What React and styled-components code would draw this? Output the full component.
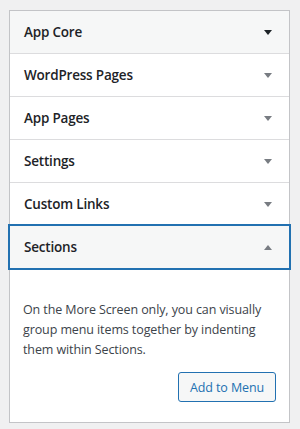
import React from 'react'
import styled, { createGlobalStyle } from 'styled-components'

const GlobalStyle = createGlobalStyle`
  html, body {
    margin: 0;
    padding: 0;
    background: #f0f0f1;
  }
  body {
    font-family: "Open Sans", "Noto Sans", sans-serif;
    color: #1d2327;
  }
`

const sections = [
  { title: 'App Core', active: true },
  { title: 'WordPress Pages' },
  { title: 'App Pages' },
  { title: 'Settings' },
  { title: 'Custom Links' },
  { title: 'Sections', open: true },
]

const Page = styled.div`
  padding: 10px 10px 8px 9px;
`

const Accordion = styled.div`
  border: 1px solid #c3c4c7;
  background: #fff;
`

const Section = styled.div`
  & + & {
    border-top: 1px solid #dcdcde;
  }
`

const Title = styled.div`
  position: relative;
  display: flex;
  align-items: center;
  justify-content: space-between;
  height: 42px;
  padding: 0 17px 0 14px;
  background: ${p => (p.$shade ? '#f6f7f7' : '#fff')};
  font-size: 13.5px;
  font-weight: 600;
  letter-spacing: -0.2px;
  box-shadow: ${p => (p.$focus ? '0 0 0 2px #2271b1' : 'none')};
  z-index: ${p => (p.$focus ? 1 : 0)};
`

const Arrow = styled.svg`
  width: 8px;
  height: 5px;
  transform: ${p => (p.$up ? 'rotate(180deg)' : 'none')};
  fill: ${p => (p.$dark ? '#1d2327' : '#787c82')};
`

const Body = styled.div`
  padding: 32px 13px 20px 13px;
  font-size: 12.5px;
  line-height: 20px;
  color: #3c434a;
  letter-spacing: -0.1px;
`

const Actions = styled.div`
  display: flex;
  justify-content: flex-end;
  margin-top: 12px;
`

const Button = styled.button`
  height: 30px;
  width: 98px;
  padding: 0;
  border: 1px solid #2271b1;
  border-radius: 3px;
  background: #f6f7f7;
  color: #2271b1;
  font-family: "Open Sans", "Noto Sans", sans-serif;
  font-size: 12.5px;
  letter-spacing: -0.1px;
`

export default function App() {
  return (
    <Page>
      <GlobalStyle />
      <Accordion>
        {sections.map(s => (
          <Section key={s.title}>
            <Title $shade={s.active || s.open} $focus={s.open}>
              {s.title}
              <Arrow viewBox="0 0 8 5" $up={s.open} $dark={s.active}>
                <polygon points="0,0 8,0 4,5" />
              </Arrow>
            </Title>
            {s.open && (
              <Body>
                On the More Screen only, you can visually group menu items together by indenting them within Sections.
                <Actions>
                  <Button>Add to Menu</Button>
                </Actions>
              </Body>
            )}
          </Section>
        ))}
      </Accordion>
    </Page>
  )
}
